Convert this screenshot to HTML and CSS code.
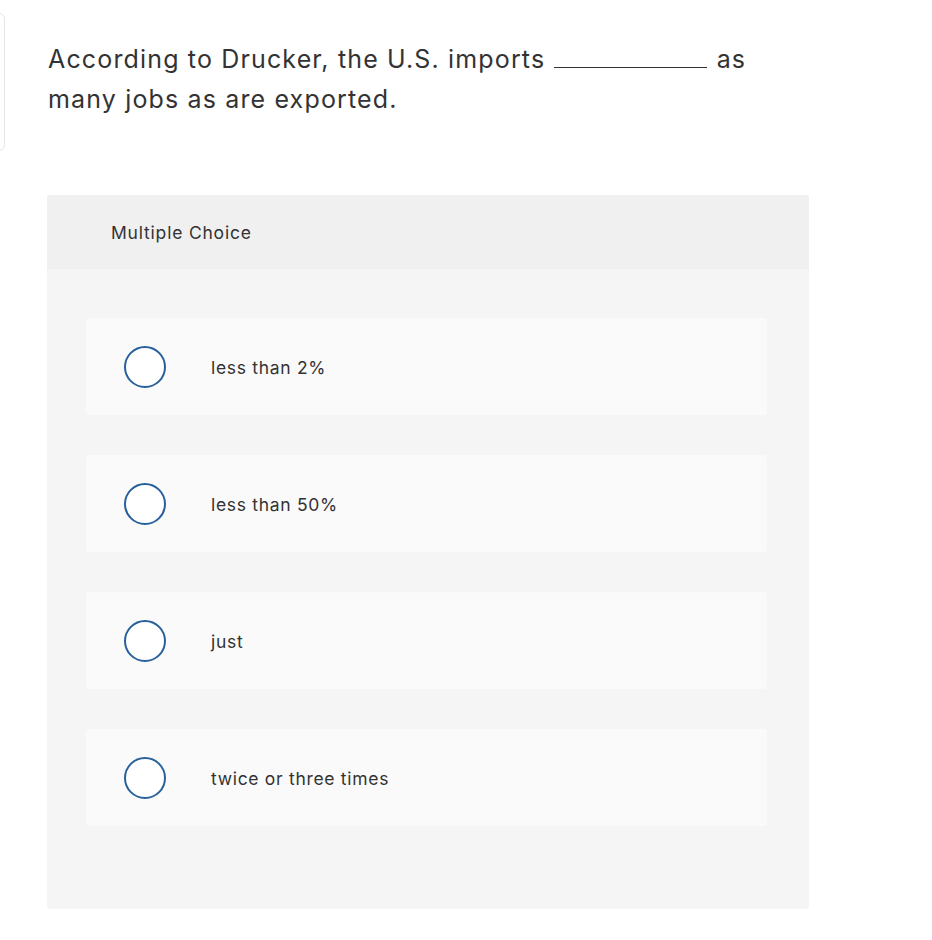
FILE: index.html
```html
<!DOCTYPE html>
<html lang="en">
<head>
<meta charset="utf-8">
<title>Multiple Choice</title>
<link rel="stylesheet" href="styles.css">
</head>
<body>
<div class="page">
  <div class="side-box"></div>
  <main class="main">
    <p class="question">According to Drucker, the U.S. imports <span class="blank"></span> as many jobs as are exported.</p>
    <section class="card">
      <header class="card-head">Multiple Choice</header>
      <div class="card-body">
        <label class="option"><span class="radio"></span><span class="opt-text">less than 2%</span></label>
        <label class="option"><span class="radio"></span><span class="opt-text">less than 50%</span></label>
        <label class="option"><span class="radio"></span><span class="opt-text">just</span></label>
        <label class="option"><span class="radio"></span><span class="opt-text">twice or three times</span></label>
      </div>
    </section>
  </main>
</div>
</body>
</html>
```

FILE: styles.css
```css
* { box-sizing: border-box; }
html, body { margin: 0; padding: 0; background: #ffffff; }
body {
  font-family: Inter, "Liberation Sans", sans-serif;
  font-variant-ligatures: none;
  color: #333333;
  width: 932px;
  height: 940px;
  overflow: hidden;
}
.page {
  display: flex;
  align-items: flex-start;
}
.side-box {
  flex: 0 0 40px;
  height: 138px;
  margin-left: -35px;
  margin-top: 13px;
  border: 1px solid #e6e6e6;
  border-radius: 6px;
}
.main {
  margin-left: 42px;
  width: 762px;
  padding-top: 39px;
}
.question {
  margin: 0;
  font-size: 25px;
  line-height: 40px;
  letter-spacing: 1.15px;
  color: #333333;
  width: 720px;
  padding-left: 1px;
}
.blank {
  display: inline-block;
  width: 153px;
  height: 24px;
  border-bottom: 1.5px solid #333333;
  vertical-align: baseline;
  margin: 0 1px;
}
.card {
  margin-top: 76px;
  background: #f5f5f5;
  border-radius: 4px;
  overflow: hidden;
}
.card-head {
  height: 74px;
  background: #f0f0f0;
  display: flex;
  align-items: center;
  padding-left: 64px;
  font-size: 17.5px;
  letter-spacing: 0.8px;
  color: #333333;
}
.card-body {
  padding: 49px 42px 83px 39px;
  display: flex;
  flex-direction: column;
  gap: 40px;
}
.option {
  height: 97px;
  background: #fafafa;
  border-radius: 4px;
  display: flex;
  align-items: center;
  padding-left: 38px;
}
.radio {
  width: 42px;
  height: 42px;
  border: 2px solid #27609c;
  border-radius: 50%;
  background: #ffffff;
  flex: 0 0 auto;
}
.opt-text {
  margin-left: 45px;
  font-size: 17.5px;
  letter-spacing: 0.7px;
  padding-top: 1px;
  color: #333333;
}
```
